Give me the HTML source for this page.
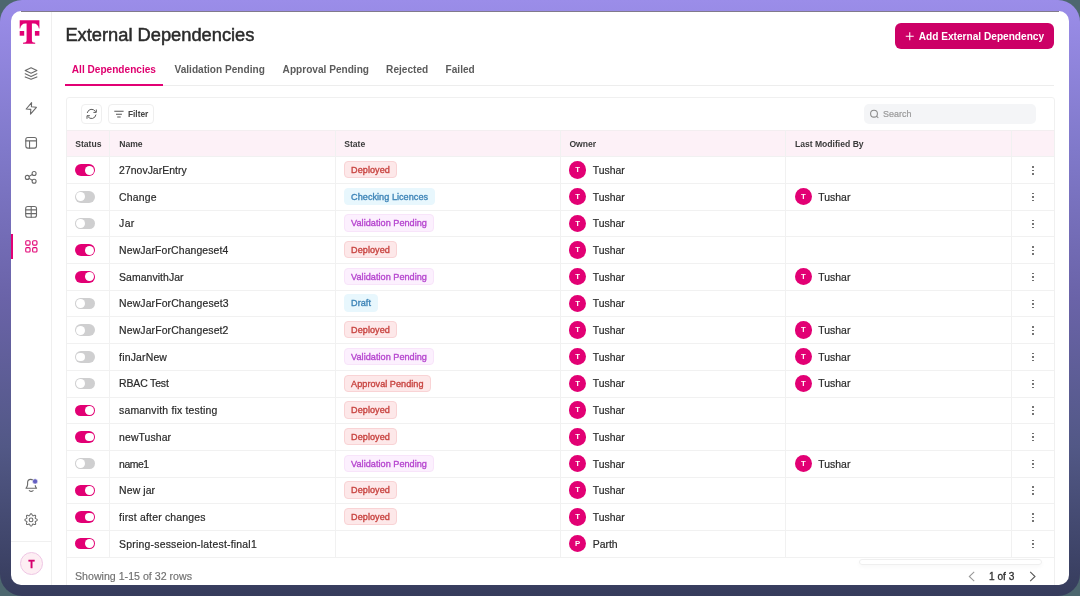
<!DOCTYPE html>
<html><head><meta charset="utf-8">
<style>
*{box-sizing:border-box;margin:0;padding:0}
html,body{width:1080px;height:596px;overflow:hidden;background:#4d676f;font-family:"Liberation Sans",sans-serif}
.frame{position:absolute;left:0;top:0;width:1080px;height:596px;border-radius:22px;background:linear-gradient(180deg,#9b8de9 0%,#8079ca 25%,#6a63a8 50%,#525886 75%,#363c5c 100%)}
.card{position:absolute;left:11px;top:11px;width:1058px;height:573.8px;border-radius:10px;background:#fff;overflow:hidden}
.pg{position:absolute;left:-11px;top:-11px;width:1080px;height:596px;will-change:transform}
.abs{position:absolute;white-space:nowrap}
.sbline{position:absolute;left:50.5px;top:0;width:1px;height:596px;background:#efefef}
.actbar{position:absolute;left:11px;top:233.5px;width:2px;height:25.5px;background:#e20074}
.sep{position:absolute;left:11px;top:541px;width:40px;height:1px;background:#f0f0f0}
.uav{position:absolute;left:19.8px;top:552px;width:23.3px;height:23.3px;border-radius:50%;background:#fdeef3;border:1px solid #eec6e4;color:#d6006e;font-weight:bold;font-size:10px;-webkit-text-stroke:0.3px #d6006e;text-align:center;line-height:24.4px}
.title{left:65.4px;top:23.2px;font-size:18.3px;line-height:24px;color:#2b2b2b;-webkit-text-stroke:0.5px #2b2b2b}
.btn{position:absolute;left:894.7px;top:23px;width:159.6px;height:26.2px;border-radius:6px;background:#cc0066}
.bt{left:918.8px;top:29.9px;font-size:10.12px;font-weight:bold;line-height:13px;color:#fff}
.tabline{position:absolute;left:65px;top:85px;width:989px;height:1px;background:#ededed}
.tab{position:absolute;top:62.7px;font-size:10.1px;line-height:14px;font-weight:bold;color:#5c5c5c}
.tab.act{color:#df006f}
.uline{position:absolute;left:65px;top:84px;width:98px;height:2px;background:#e20074}
.tc{position:absolute;left:65.7px;top:97.2px;width:989.3px;height:600px;border:1px solid #f0f0f0;border-radius:3px;background:#fff}
.tbtn{position:absolute;top:104px;height:19.7px;border:1px solid #efefef;border-radius:4px;background:#fff}
.search{position:absolute;left:864.1px;top:104.1px;width:172.2px;height:19.8px;border-radius:5px;background:#f4f5f7}
.hdr{position:absolute;left:66.7px;top:130.4px;width:987.3px;height:26px;background:#fdf1f7;border-top:1px solid #f3eef0}
.hl{position:absolute;left:66.7px;width:987.3px;height:1px;background:#f1f1f1}
.vl{position:absolute;top:130.4px;width:1px;height:426.6px;background:#f1f1f1}
.th{position:absolute;top:138.5px;font-size:8.6px;line-height:11px;font-weight:bold;color:#3a3a3a}
.row{position:absolute;left:0;width:1080px;height:26.68px}
.cell{position:absolute;top:0;height:26.68px;display:flex;align-items:center;white-space:nowrap;font-size:10.45px;color:#2a2a2a}
.nm{left:119.1px}
.nm span{position:relative;top:0.8px;-webkit-text-stroke:0.2px #2a2a2a}
.bd{left:343.9px}
.tg{position:absolute;left:75.2px;top:8px;width:20px;height:11.5px;border-radius:6px}
.tg.on{background:#e20074}
.tg.off{background:#cfcfd0}
.tg::after{content:"";position:absolute;top:1.35px;width:8.8px;height:8.8px;border-radius:50%;background:#fff}
.tg.on::after{left:10px}
.tg.off::after{left:1.2px}
.badge{display:block;height:17.3px;line-height:16.3px;padding:0 6.2px;border-radius:4px;font-size:9.1px;letter-spacing:0.04px;font-weight:normal;-webkit-text-stroke:0.35px currentColor;border:1px solid transparent}
.b-red{background:#fde8e9;border-color:#f9d3d5;color:#c84440}
.b-blue{background:#e8f7fd;border-color:#e8f7fd;color:#3f85b8}
.b-purple{background:#fcf0fe;border-color:#f8e4fa;color:#b646cf}
.av{display:inline-block;position:relative;top:0.3px;width:17.4px;height:17.4px;border-radius:50%;background:#e20074;color:#fff;font-size:7.8px;font-weight:bold;text-align:center;line-height:18.2px;margin-right:6.3px}
.un{display:inline-block;position:relative;top:0.8px;-webkit-text-stroke:0.2px #2a2a2a}
.kb{position:absolute;left:1032px;top:9.8px;width:2px;height:9px}
.kb i{position:absolute;left:0;width:1.5px;height:1.5px;border-radius:50%;background:#5a5a5a}
.kb i:nth-child(1){top:0}.kb i:nth-child(2){top:3.5px}.kb i:nth-child(3){top:7px}
.foot{left:75px;top:569px;font-size:10.64px;line-height:14px;color:#707070;-webkit-text-stroke:0.15px #707070}
.ov{position:absolute;left:0;top:0}
</style></head><body>
<div class="frame"></div>
<div class="card"><div class="pg">
  <div class="sbline"></div>
  <div class="actbar"></div>
  <div class="sep"></div>
  <div class="uav">T</div>

  <div class="abs title">External Dependencies</div>
  <div class="btn"></div>
  <div class="abs bt">Add External Dependency</div>

  <div class="tabline"></div>
  <div class="tab act" style="left:71.8px">All Dependencies</div>
  <div class="tab" style="left:174.5px">Validation Pending</div>
  <div class="tab" style="left:282.6px">Approval Pending</div>
  <div class="tab" style="left:386.1px">Rejected</div>
  <div class="tab" style="left:445.6px">Failed</div>
  <div class="uline"></div>

  <div class="tc"></div>
  <div class="tbtn" style="left:80.9px;width:20.7px"></div>
  <div class="tbtn" style="left:108.3px;width:45.4px"></div>
  <div class="abs" style="left:127.9px;top:109px;font-size:8.4px;line-height:11px;font-weight:bold;color:#444">Filter</div>
  <div class="search"></div>
  <div class="abs" style="left:883.1px;top:108.6px;font-size:8.95px;line-height:11px;color:#9a9a9a;-webkit-text-stroke:0.2px #9a9a9a">Search</div>

  <div class="hdr"></div>
  <div class="th" style="left:75.2px">Status</div>
  <div class="th" style="left:119.2px">Name</div>
  <div class="th" style="left:344.2px">State</div>
  <div class="th" style="left:569.4px">Owner</div>
  <div class="th" style="left:794.9px">Last Modified By</div>
  <div class="hl" style="top:156.40px"></div><div class="hl" style="top:183.08px"></div><div class="hl" style="top:209.76px"></div><div class="hl" style="top:236.44px"></div><div class="hl" style="top:263.12px"></div><div class="hl" style="top:289.80px"></div><div class="hl" style="top:316.48px"></div><div class="hl" style="top:343.16px"></div><div class="hl" style="top:369.84px"></div><div class="hl" style="top:396.52px"></div><div class="hl" style="top:423.20px"></div><div class="hl" style="top:449.88px"></div><div class="hl" style="top:476.56px"></div><div class="hl" style="top:503.24px"></div><div class="hl" style="top:529.92px"></div><div class="hl" style="top:556.60px"></div>
  <div class="vl" style="left:109.2px"></div>
  <div class="vl" style="left:335.1px"></div>
  <div class="vl" style="left:560.2px"></div>
  <div class="vl" style="left:784.7px"></div>
  <div class="vl" style="left:1010.5px"></div>
<div class="row" style="top:156.40px"><div class="tg on"></div><div class="cell nm"><span style="letter-spacing:0.02px">27novJarEntry</span></div><div class="cell bd"><span class="badge b-red">Deployed</span></div><div class="cell" style="left:569.0px"><span class="av">T</span><span class="un">Tushar</span></div><div class="kb"><i></i><i></i><i></i></div></div>
<div class="row" style="top:183.08px"><div class="tg off"></div><div class="cell nm"><span style="letter-spacing:0.16px">Change</span></div><div class="cell bd"><span class="badge b-blue">Checking Licences</span></div><div class="cell" style="left:569.0px"><span class="av">T</span><span class="un">Tushar</span></div><div class="cell" style="left:794.6px"><span class="av">T</span><span class="un">Tushar</span></div><div class="kb"><i></i><i></i><i></i></div></div>
<div class="row" style="top:209.76px"><div class="tg off"></div><div class="cell nm"><span style="letter-spacing:0.35px">Jar</span></div><div class="cell bd"><span class="badge b-purple">Validation Pending</span></div><div class="cell" style="left:569.0px"><span class="av">T</span><span class="un">Tushar</span></div><div class="kb"><i></i><i></i><i></i></div></div>
<div class="row" style="top:236.44px"><div class="tg on"></div><div class="cell nm"><span style="letter-spacing:0.106px">NewJarForChangeset4</span></div><div class="cell bd"><span class="badge b-red">Deployed</span></div><div class="cell" style="left:569.0px"><span class="av">T</span><span class="un">Tushar</span></div><div class="kb"><i></i><i></i><i></i></div></div>
<div class="row" style="top:263.12px"><div class="tg on"></div><div class="cell nm"><span style="letter-spacing:0.055px">SamanvithJar</span></div><div class="cell bd"><span class="badge b-purple">Validation Pending</span></div><div class="cell" style="left:569.0px"><span class="av">T</span><span class="un">Tushar</span></div><div class="cell" style="left:794.6px"><span class="av">T</span><span class="un">Tushar</span></div><div class="kb"><i></i><i></i><i></i></div></div>
<div class="row" style="top:289.80px"><div class="tg off"></div><div class="cell nm"><span style="letter-spacing:0.117px">NewJarForChangeset3</span></div><div class="cell bd"><span class="badge b-blue">Draft</span></div><div class="cell" style="left:569.0px"><span class="av">T</span><span class="un">Tushar</span></div><div class="kb"><i></i><i></i><i></i></div></div>
<div class="row" style="top:316.48px"><div class="tg off"></div><div class="cell nm"><span style="letter-spacing:0.111px">NewJarForChangeset2</span></div><div class="cell bd"><span class="badge b-red">Deployed</span></div><div class="cell" style="left:569.0px"><span class="av">T</span><span class="un">Tushar</span></div><div class="cell" style="left:794.6px"><span class="av">T</span><span class="un">Tushar</span></div><div class="kb"><i></i><i></i><i></i></div></div>
<div class="row" style="top:343.16px"><div class="tg off"></div><div class="cell nm"><span style="letter-spacing:0.175px">finJarNew</span></div><div class="cell bd"><span class="badge b-purple">Validation Pending</span></div><div class="cell" style="left:569.0px"><span class="av">T</span><span class="un">Tushar</span></div><div class="cell" style="left:794.6px"><span class="av">T</span><span class="un">Tushar</span></div><div class="kb"><i></i><i></i><i></i></div></div>
<div class="row" style="top:369.84px"><div class="tg off"></div><div class="cell nm"><span style="letter-spacing:-0.137px">RBAC Test</span></div><div class="cell bd"><span class="badge b-red">Approval Pending</span></div><div class="cell" style="left:569.0px"><span class="av">T</span><span class="un">Tushar</span></div><div class="cell" style="left:794.6px"><span class="av">T</span><span class="un">Tushar</span></div><div class="kb"><i></i><i></i><i></i></div></div>
<div class="row" style="top:396.52px"><div class="tg on"></div><div class="cell nm"><span style="letter-spacing:0.185px">samanvith fix testing</span></div><div class="cell bd"><span class="badge b-red">Deployed</span></div><div class="cell" style="left:569.0px"><span class="av">T</span><span class="un">Tushar</span></div><div class="kb"><i></i><i></i><i></i></div></div>
<div class="row" style="top:423.20px"><div class="tg on"></div><div class="cell nm"><span style="letter-spacing:0.087px">newTushar</span></div><div class="cell bd"><span class="badge b-red">Deployed</span></div><div class="cell" style="left:569.0px"><span class="av">T</span><span class="un">Tushar</span></div><div class="kb"><i></i><i></i><i></i></div></div>
<div class="row" style="top:449.88px"><div class="tg off"></div><div class="cell nm"><span style="letter-spacing:-0.475px">name1</span></div><div class="cell bd"><span class="badge b-purple">Validation Pending</span></div><div class="cell" style="left:569.0px"><span class="av">T</span><span class="un">Tushar</span></div><div class="cell" style="left:794.6px"><span class="av">T</span><span class="un">Tushar</span></div><div class="kb"><i></i><i></i><i></i></div></div>
<div class="row" style="top:476.56px"><div class="tg on"></div><div class="cell nm"><span style="letter-spacing:0.1px">New jar</span></div><div class="cell bd"><span class="badge b-red">Deployed</span></div><div class="cell" style="left:569.0px"><span class="av">T</span><span class="un">Tushar</span></div><div class="kb"><i></i><i></i><i></i></div></div>
<div class="row" style="top:503.24px"><div class="tg on"></div><div class="cell nm"><span style="letter-spacing:0.194px">first after changes</span></div><div class="cell bd"><span class="badge b-red">Deployed</span></div><div class="cell" style="left:569.0px"><span class="av">T</span><span class="un">Tushar</span></div><div class="kb"><i></i><i></i><i></i></div></div>
<div class="row" style="top:529.92px"><div class="tg on"></div><div class="cell nm"><span style="letter-spacing:0.211px">Spring-sesseion-latest-final1</span></div><div class="cell" style="left:569.0px"><span class="av">P</span><span class="un">Parth</span></div><div class="kb"><i></i><i></i><i></i></div></div>
  <div class="abs foot">Showing 1-15 of 32 rows</div>
  <div class="abs" style="left:858.7px;top:558.7px;width:183.8px;height:6px;border:1px solid #efefef;border-radius:4px;box-shadow:0 2px 4px rgba(0,0,0,0.03)"></div>
  <div class="abs" style="left:989px;top:569.7px;font-size:10.1px;line-height:13px;color:#2f2f2f;-webkit-text-stroke:0.3px #2f2f2f">1 of 3</div>

  <svg class="ov" width="1080" height="596" viewBox="0 0 1080 596">
    <!-- logo -->
    <g fill="#e20074">
      <path d="M19.7 20.3H39.4V28.6H38.9C38.6 25.4 36.6 23.4 33.6 23.4H31.9V40.6C31.9 42.1 33.1 42.7 35.2 42.8V43.8H23V42.8C25.2 42.7 26.6 42.1 26.6 40.6V23.4H25.5C22.5 23.4 20.5 25.4 20.2 28.6H19.7Z"/>
      <rect x="19.7" y="31" width="4.5" height="4.7"/>
      <rect x="34.9" y="31" width="4.5" height="4.7"/>
    </g>
    <g fill="none" stroke="#6a6a6a" stroke-width="1.1" stroke-linejoin="round" stroke-linecap="round">
      <!-- layers -->
      <path d="M31.06 67.7L25.2 70.5L31.06 73.3L36.9 70.5Z"/>
      <path d="M25.2 73.8L31.06 76.4L36.9 73.8"/>
      <path d="M25.2 76.9L31.06 79.3L36.9 76.9"/>
      <!-- bolt -->
      <path d="M31.6 102.6L31.4 106.8L36.4 107.3L30.5 114.2L30.8 109.4L26.2 109Z"/>
      <!-- layout -->
      <rect x="25.8" y="137.5" width="10.7" height="10.6" rx="2"/>
      <path d="M25.8 140.9H36.5M29.55 140.9V148.1"/>
      <!-- share -->
      <circle cx="27.3" cy="177.4" r="2"/><circle cx="34.1" cy="173.5" r="2"/><circle cx="34.1" cy="181.3" r="2"/>
      <path d="M29.1 176.4L32.3 174.5M29.1 178.4L32.3 180.3"/>
      <!-- table -->
      <rect x="25.7" y="206.5" width="10.8" height="10.8" rx="2"/>
      <path d="M25.7 209.9H36.5M25.7 213.6H36.5M31.2 206.5V217.3"/>
      <!-- bell -->
      <path d="M33 479.9C32.3 479.5 31.4 479.4 30.6 479.4C28.8 479.4 27.6 480.8 27.6 482.8V484.6C27.6 486 26.8 487.3 26 488.3H36.6C35.8 487.3 35.2 486.3 35.2 485.5"/>
      <path d="M29.3 490.6C30.3 491.4 32.1 491.4 33.1 490.6"/>
      <!-- gear -->
      <path stroke-width="1.05" d="M31.07 513.70 L31.47 513.83 L31.82 514.17 L32.11 514.65 L32.34 515.14 L32.55 515.53 L32.79 515.74 L33.11 515.76 L33.53 515.63 L34.04 515.45 L34.59 515.32 L35.08 515.32 L35.45 515.52 L35.65 515.89 L35.65 516.38 L35.52 516.93 L35.34 517.44 L35.21 517.86 L35.23 518.18 L35.44 518.42 L35.83 518.63 L36.32 518.86 L36.80 519.15 L37.14 519.50 L37.27 519.90 L37.14 520.30 L36.80 520.65 L36.32 520.94 L35.83 521.17 L35.44 521.38 L35.23 521.62 L35.21 521.94 L35.34 522.36 L35.52 522.87 L35.65 523.42 L35.65 523.91 L35.45 524.28 L35.08 524.48 L34.59 524.48 L34.04 524.35 L33.53 524.17 L33.11 524.04 L32.79 524.06 L32.55 524.27 L32.34 524.66 L32.11 525.15 L31.82 525.63 L31.47 525.97 L31.07 526.10 L30.67 525.97 L30.32 525.63 L30.03 525.15 L29.80 524.66 L29.59 524.27 L29.35 524.06 L29.03 524.04 L28.61 524.17 L28.10 524.35 L27.55 524.48 L27.06 524.48 L26.69 524.28 L26.49 523.91 L26.49 523.42 L26.62 522.87 L26.80 522.36 L26.93 521.94 L26.91 521.62 L26.70 521.38 L26.31 521.17 L25.82 520.94 L25.34 520.65 L25.00 520.30 L24.87 519.90 L25.00 519.50 L25.34 519.15 L25.82 518.86 L26.31 518.63 L26.70 518.42 L26.91 518.18 L26.93 517.86 L26.80 517.44 L26.62 516.93 L26.49 516.38 L26.49 515.89 L26.69 515.52 L27.06 515.32 L27.55 515.32 L28.10 515.45 L28.61 515.63 L29.03 515.76 L29.35 515.74 L29.59 515.53 L29.80 515.14 L30.03 514.65 L30.32 514.17 L30.67 513.83Z"/>
      <circle cx="31.07" cy="519.9" r="1.85"/>
    </g>
    <circle cx="35.1" cy="481.4" r="2.6" fill="#645fc2" stroke="#fff" stroke-width="0.6"/>
    <!-- grid -->
    <g fill="none" stroke="#e20074" stroke-width="1.1">
      <rect x="25.75" y="240.75" width="4.3" height="4.4" rx="1.1"/><rect x="32.65" y="240.75" width="4.3" height="4.4" rx="1.1"/>
      <rect x="25.75" y="247.65" width="4.3" height="4.4" rx="1.1"/><rect x="32.65" y="247.65" width="4.3" height="4.4" rx="1.1"/>
    </g>
    <!-- plus -->
    <path d="M909.75 32.3V40.3M905.75 36.3H913.75" stroke="#fff" stroke-width="1.1"/>
    <!-- refresh -->
    <g fill="none" stroke="#5c5c5c" stroke-width="1.0" stroke-linecap="round" stroke-linejoin="round">
      <path d="M87.3 112.6A4.45 4.45 0 0 1 95.4 111.4"/>
      <path d="M96.3 109.9V112.4H93.8"/>
      <path d="M95.9 115.0A4.45 4.45 0 0 1 88.0 116.8"/>
      <path d="M87.0 118.4V115.7H89.5"/>
    </g>
    <!-- filter -->
    <path d="M114.3 111.2H123.6M116 114.2H121.9M117.2 117H120.7" stroke="#555" stroke-width="1.1"/>
    <!-- search -->
    <g fill="none" stroke="#8a8a8a" stroke-width="1.05"><circle cx="874" cy="113.7" r="3.4"/><path d="M876.5 116.2L878.3 118"/></g>
    <!-- chevrons -->
    <path d="M974.2 571.9L969.3 576.5L974.2 581.1" fill="none" stroke="#999" stroke-width="1.05"/>
    <path d="M1030.2 571.9L1035 576.5L1030.2 581.1" fill="none" stroke="#555" stroke-width="1.05"/>
  </svg>
</div></div>
<div style="position:absolute;left:21px;top:11px;width:1038px;height:1px;background:#817a8c"></div>
</body></html>
